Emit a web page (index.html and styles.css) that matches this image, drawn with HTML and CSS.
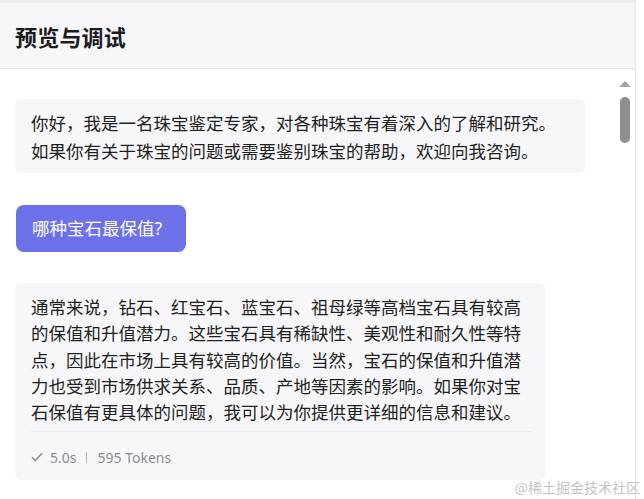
FILE: index.html
```html
<!DOCTYPE html>
<html lang="zh-CN">
<head>
    <meta charset="UTF-8">
    <meta name="viewport" content="width=device-width, initial-scale=1.0">
    <title>预览与调试</title>
    <link rel="stylesheet" href="styles.css">
</head>
<body>
    <div class="panel">
        <div class="header">
            <h1>预览与调试</h1>
        </div>
        <div class="chat">
            <div class="bubble bot intro">
                你好，我是一名珠宝鉴定专家，对各种珠宝有着深入的了解和研究。<br>
                如果你有关于珠宝的问题或需要鉴别珠宝的帮助，欢迎向我咨询。
            </div>

            <div class="bubble user">哪种宝石最保值?</div>

            <div class="bubble bot answer">
                <p>通常来说，钻石、红宝石、蓝宝石、祖母绿等高档宝石具有较高的保值和升值潜力。这些宝石具有稀缺性、美观性和耐久性等特点，因此在市场上具有较高的价值。当然，宝石的保值和升值潜力也受到市场供求关系、品质、产地等因素的影响。如果你对宝石保值有更具体的问题，我可以为你提供更详细的信息和建议。</p>
                <div class="meta">
                    <svg class="check" width="12" height="10" viewBox="0 0 12 10">
                        <path d="M1 5.2 L4.3 8.5 L11 1.2" fill="none" stroke="#8c9098" stroke-width="1.6"/>
                    </svg>
                    <span>5.0s</span>
                    <span class="sep"></span>
                    <span>595 Tokens</span>
                </div>
            </div>

            <!-- scrollbar drawn over the chat area -->
            <div class="scrollbar">
                <div class="arrow"></div>
                <div class="thumb"></div>
            </div>
        </div>
    </div>
    <div class="watermark">@稀土掘金技术社区</div>
</body>
</html>
```

FILE: styles.css
```css
body {
    margin: 0;
    padding: 0;
    background-color: #fff;
    font-family: "Noto Sans", "Noto Sans CJK SC", sans-serif;
    color: #1f1f22;
    height: 499px;
    overflow: hidden;
    position: relative;
}
.panel {
    width: 636px;
    height: 499px;
    border-top: 3px solid #ececef;
    border-right: 1px solid #e4e4e8;
    box-sizing: border-box;
    display: flex;
    flex-direction: column;
}
.header {
    height: 66px;
    background-color: #f7f7f9;
    border-bottom: 1px solid #e3e3e7;
    box-sizing: border-box;
    display: flex;
    align-items: center;
    padding-left: 15px;
}
.header h1 {
    margin: 0;
    font-family: "Noto Sans CJK SC", sans-serif;
    font-size: 22px;
    font-weight: 700;
    color: #1c1c1f;
    letter-spacing: 0.2px;
}
.chat {
    flex: 1;
    position: relative;
    overflow: hidden;
    padding: 30px 0 0 15px;
    display: flex;
    flex-direction: column;
    align-items: flex-start;
}
.bubble {
    font-size: 17.5px;
    border-radius: 7px;
    box-sizing: border-box;
}
.bot {
    background-color: #f7f7fa;
    color: #1f1f22;
}
.intro {
    width: 571px;
    padding: 10px 16px 8px;
    line-height: 28px;
}
.user {
    margin-top: 32px;
    margin-left: 1px;
    width: 170px;
    padding: 10px 16px;
    line-height: 27px;
    background-color: #6c71ea;
    color: #fff;
    border-radius: 8px;
}
.answer {
    margin-top: 31px;
    width: 531px;
    padding: 11px 14px 13px 16px;
}
.answer p {
    margin: 0;
    line-height: 26.25px;
    padding-bottom: 6px;
    border-bottom: 1px solid #e8e8ec;
}
.meta {
    display: flex;
    align-items: center;
    height: 20px;
    margin-top: 15px;
    font-size: 14px;
    color: #8a8e97;
}
.check {
    margin-right: 7px;
}
.sep {
    width: 1px;
    height: 11px;
    background-color: #b4b7bd;
    margin: 0 10px;
}
.scrollbar {
    position: absolute;
    top: 12px;
    right: 4px;
    width: 12px;
}
.arrow {
    width: 0;
    height: 0;
    margin-left: 0;
    border-left: 6px solid transparent;
    border-right: 6px solid transparent;
    border-bottom: 6px solid #a3a3a3;
}
.thumb {
    margin: 10px 0 0 1px;
    width: 10px;
    height: 46px;
    border-radius: 5px;
    background-color: #8f8f8f;
}
.watermark {
    position: absolute;
    right: 4px;
    bottom: 2px;
    font-size: 14px;
    color: #c4c4c6;
    font-family: "Noto Sans CJK SC", sans-serif;
}
```
